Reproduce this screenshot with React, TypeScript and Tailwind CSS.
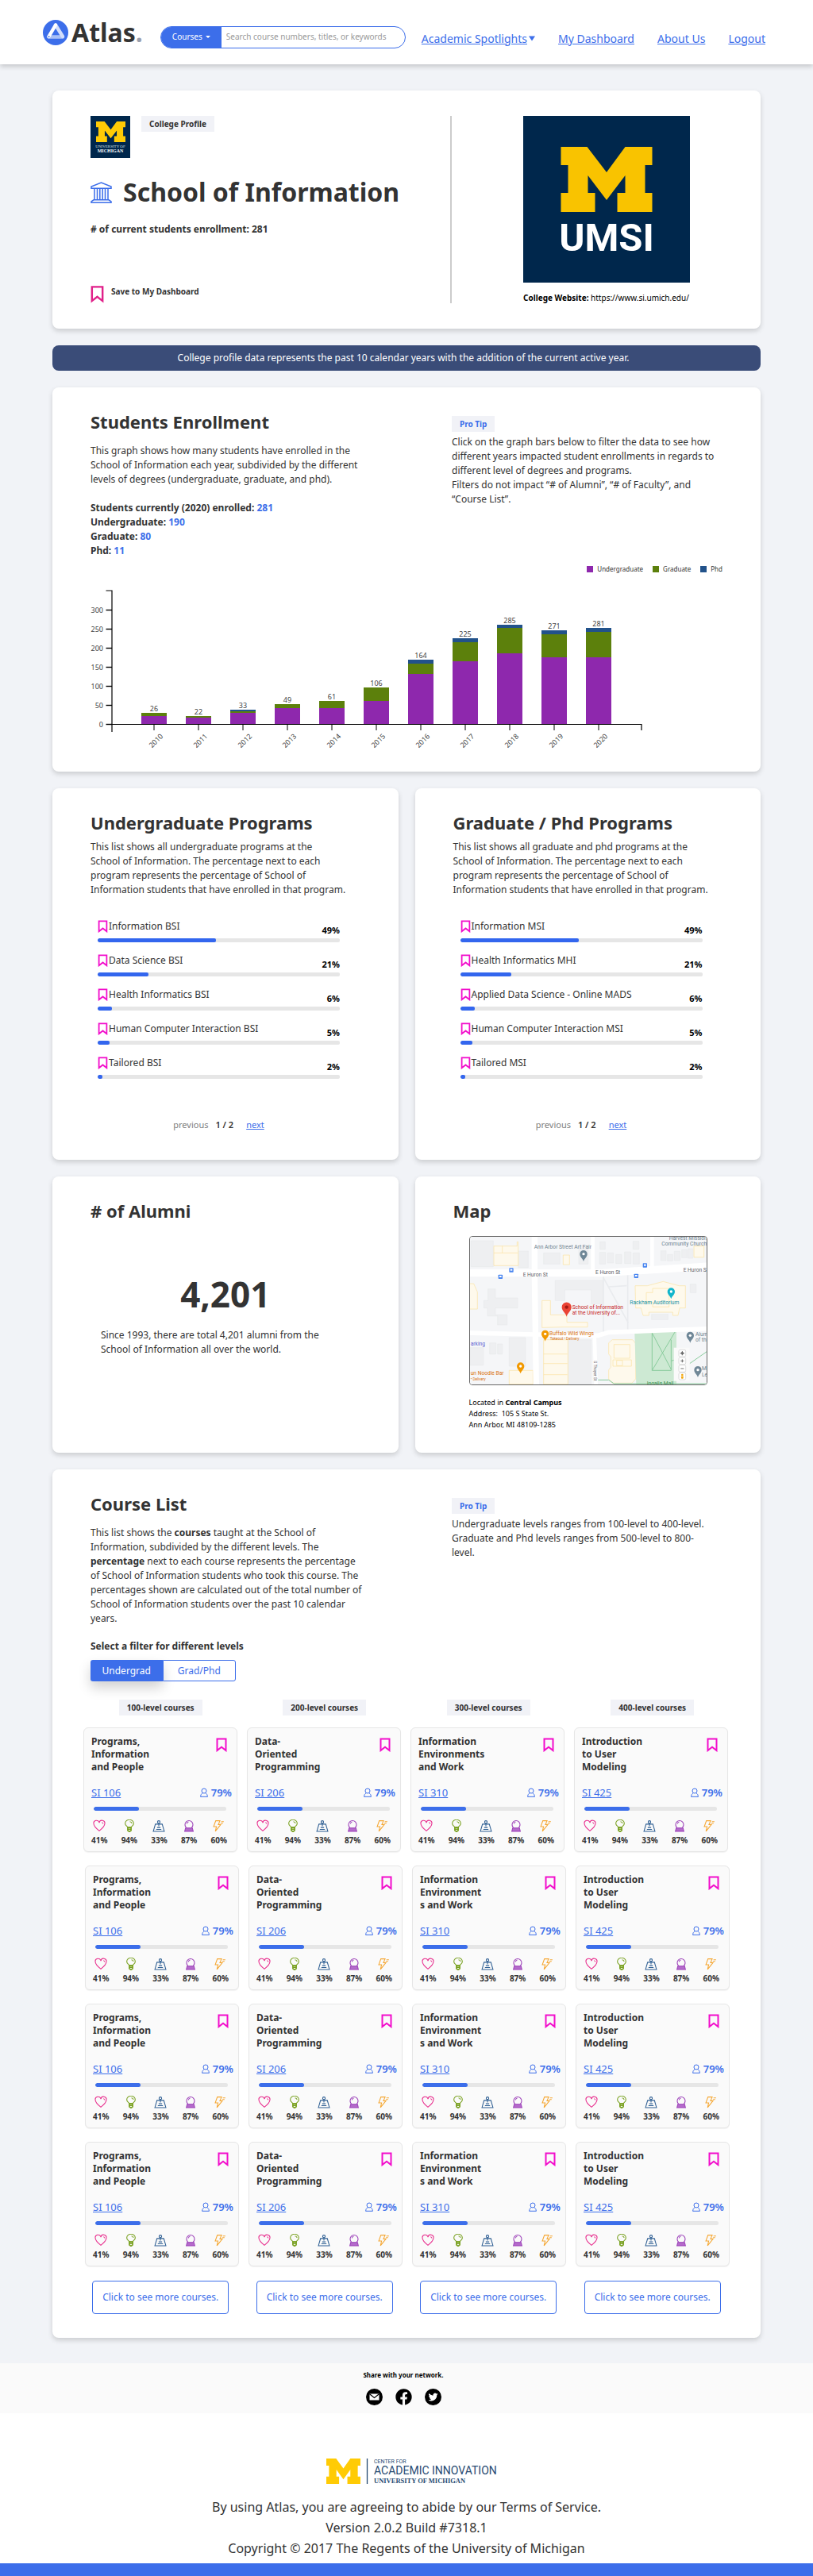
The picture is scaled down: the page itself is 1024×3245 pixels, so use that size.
import React from "react";
import { FaFacebook } from "react-icons/fa";

const M_PATH =
  "M0 0H33L57.5 32 81 0H115V23H106V58H115V82H71V58H81V36L57.5 67 34 36V58H43V82H0V58H9V23H0Z";

function Bookmark({ className }: { className: string }) {
  return (
    <svg viewBox="0 0 14 18" className={className} fill="none" stroke="currentColor" strokeWidth="2" aria-hidden="true">
      <path d="M1.5 1.5h11v14.6L7 11.8l-5.5 4.3z" />
    </svg>
  );
}

function Badge({ children, blue = false }: { children: React.ReactNode; blue?: boolean }) {
  return (
    <span
      className={
        "inline-block bg-[#f1f2f7] px-[10px] text-[10px] leading-5 font-bold whitespace-nowrap " +
        (blue ? "text-[#3c6eea]" : "")
      }
    >
      {children}
    </span>
  );
}

function Card({ className = "", children }: { className?: string; children: React.ReactNode }) {
  return (
    <section className={"rounded-lg bg-white shadow-[0_3px_6px_rgba(0,0,0,0.16)] " + className}>{children}</section>
  );
}

function Header() {
  return (
    <header className="relative flex h-[81px] items-center bg-white pt-3 pr-[60px] pl-[54px] shadow-[0_3px_6px_rgba(0,0,0,0.18)]">
      <a href="#" aria-label="Atlas" className="flex items-center pb-3">
        <svg viewBox="0 0 32 32" className="h-8 w-8" aria-hidden="true">
          <circle cx="16" cy="16" r="16" fill="#3c6eea" />
          <path d="M7.500 21.500h17.500" stroke="#a9c0f6" strokeWidth="4.4" strokeLinecap="round" />
          <path d="M16 6.500 25 21" stroke="#d3defb" strokeWidth="4.4" strokeLinecap="round" />
          <path d="M16 6.500 7.500 21" stroke="#fff" strokeWidth="4.4" strokeLinecap="round" />
          <circle cx="7.600" cy="21.200" r="1" fill="#3c6eea" />
        </svg>
        <span className="ml-1 text-[32px] leading-8 font-bold">
          Atlas<span className="text-[#9aa0ae]">.</span>
        </span>
      </a>
      <form className="ml-[22px] flex h-7 w-[309px] shrink-0 overflow-hidden rounded-full border border-[#3c6eea]">
        <button type="button" className="flex w-[76px] items-center justify-center gap-1 bg-[#3c6eea] text-[10px] text-white">
          Courses
          <svg viewBox="0 0 6 3" className="h-[3px] w-[6px]" fill="currentColor" aria-hidden="true">
            <path d="M0 0h6L3 3z" />
          </svg>
        </button>
        <input
          aria-label="Search courses"
          placeholder="Search course numbers, titles, or keywords"
          className="min-w-0 flex-1 px-[6px] text-[10px] outline-none placeholder:text-[#999]"
        />
      </form>
      <nav className="flex flex-1 justify-between pt-1 pl-5 text-[14px] leading-5 whitespace-nowrap text-[#3c6eea]">
        <span className="flex items-center">
          <a href="#" className="underline">Academic Spotlights</a>
          <svg viewBox="0 0 9 7" className="ml-0.5 h-[7px] w-2" fill="currentColor" aria-hidden="true">
            <path d="M0 0h9L4.5 7z" />
          </svg>
        </span>
        <a href="#" className="underline">My Dashboard</a>
        <a href="#" className="underline">About Us</a>
        <a href="#" className="underline">Logout</a>
      </nav>
    </header>
  );
}

function Profile() {
  return (
    <Card className="flex py-8 pl-12">
      <div className="flex h-[236px] w-[453px] flex-col">
        <div className="flex items-start gap-[14px]">
          <svg viewBox="0 0 50 53" className="h-[53px] w-[50px]" role="img" aria-label="University of Michigan">
            <rect width="50" height="53" fill="#00274c" />
            <svg x="7" y="7" width="37" height="26" viewBox="0 0 115 82" preserveAspectRatio="none">
              <path d={M_PATH} fill="#ffcb05" />
            </svg>
            <text x="25" y="39.5" textAnchor="middle" fontFamily="Liberation Serif" fontSize="5" fill="#dfe4ea">UNIVERSITY OF</text>
            <text x="25" y="46" textAnchor="middle" fontFamily="Liberation Serif" fontWeight="700" fontSize="6" fill="#fff">MICHIGAN</text>
          </svg>
          <Badge>College Profile</Badge>
        </div>
        <div className="mt-[23px] flex items-center gap-[14px]">
          <svg viewBox="0 0 27 27" className="h-[27px] w-[27px]" fill="none" stroke="#3c6eea" strokeWidth="1.5" aria-hidden="true">
            <path d="M1 8.200V6L13.500 1 26 6v2.200zM5 8.200v14M8.500 8.200v14M11.800 8.200v14M15.200 8.200v14M18.500 8.200v14M22 8.200v14M4 22.800h19L26 25v1.200H1V25z" />
          </svg>
          <h1 className="text-[32px] leading-10 font-bold">School of Information</h1>
        </div>
        <p className="mt-[18px] leading-[18px] font-bold"># of current students enrollment: 281</p>
        <button type="button" className="mt-auto flex items-start gap-[9px] text-left">
          <Bookmark className="h-[23px] w-[17px] text-[#e0218a]" />
          <span className="text-[10px] leading-4 font-bold">Save to My Dashboard</span>
        </button>
      </div>
      <div className="w-0.5 bg-[#ccc]" />
      <div className="flex flex-1 flex-col items-center">
        <svg viewBox="0 0 210 210" className="h-[210px] w-[210px]" role="img" aria-label="UMSI">
          <rect width="210" height="210" fill="#00274c" />
          <g transform="translate(47.500 39)">
            <path d={M_PATH} fill="#f9c300" />
          </g>
          <text x="105" y="170" textAnchor="middle" fontFamily="Roboto" fontWeight="700" fontSize="49" fill="#fff">UMSI</text>
        </svg>
        <p className="mt-3 text-[10px] leading-[14px] text-black">
          <b>College Website:</b> <a href="#">https://www.si.umich.edu/</a>
        </p>
      </div>
    </Card>
  );
}

const BARS: [string, number, number, number, number][] = [
  ["2010", 26, 10, 4, 0],
  ["2011", 22, 8, 2, 0],
  ["2012", 33, 14, 2, 2],
  ["2013", 49, 20, 5, 0],
  ["2014", 61, 20, 9, 0],
  ["2015", 106, 29, 17, 0],
  ["2016", 164, 63, 13, 5],
  ["2017", 225, 79, 24, 5],
  ["2018", 285, 89, 32, 4],
  ["2019", 271, 84, 29, 5],
  ["2020", 281, 84, 32, 5],
];

function Chart() {
  const base = 182;
  return (
    <svg viewBox="0 0 720 219" className="h-[219px] w-[720px]" fontSize="9" fill="#444" role="img" aria-label="Students enrolled each year">
      {BARS.map(([year, total, u, g, p], i) => {
        const x = 80 + i * 56;
        return (
          <g key={year}>
            <rect x={x - 16} y={base - u} width="32" height={u} fill="#8e28ad" />
            <rect x={x - 16} y={base - u - g} width="32" height={g} fill="#5c800c" />
            <rect x={x - 16} y={base - u - g - p} width="32" height={p} fill="#22528a" />
            <text x={x} y={base - u - g - p - 2} textAnchor="middle">{total}</text>
            <path d={`M${x} ${base}v8`} stroke="#000" />
            <text transform={`translate(${x + 12} 198) rotate(-45)`} textAnchor="end">{year}</text>
          </g>
        );
      })}
      <path d="M19.500 14H27V192M27 182.500H694V190" fill="none" stroke="#000" strokeWidth="1.200" />
      {[0, 50, 100, 150, 200, 250, 300].map((v) => (
        <g key={v}>
          <path d={`M19.500 ${182.5 - v * 0.48}H27`} stroke="#000" strokeWidth="1.400" />
          <text x="16" y={185.5 - v * 0.48} textAnchor="end">{v}</text>
        </g>
      ))}
    </svg>
  );
}

function LegendItem({ color, label }: { color: string; label: string }) {
  return (
    <span className="flex items-center gap-[5px]">
      <span className={"h-2 w-2 " + color} />
      {label}
    </span>
  );
}

function Enrollment() {
  return (
    <Card className="px-12 pt-7 pb-[23px]">
      <div className="flex">
        <div className="w-[455px]">
          <h2 className="text-[22px] leading-[30px] font-bold">Students Enrollment</h2>
          <p className="mt-[13px] max-w-[350px] leading-[18px]">
            This graph shows how many students have enrolled in the School of Information each year, subdivided by the
            different levels of degrees (undergraduate, graduate, and phd).
          </p>
          <p className="mt-[18px] leading-[18px] font-bold">
            Students currently (2020) enrolled: <span className="text-[#3c6eea]">281</span>
            <br />
            Undergraduate: <span className="text-[#3c6eea]">190</span>
            <br />
            Graduate: <span className="text-[#3c6eea]">80</span>
            <br />
            Phd: <span className="text-[#3c6eea]">11</span>
          </p>
        </div>
        <div className="w-[338px] pt-2">
          <Badge blue>Pro Tip</Badge>
          <p className="mt-1 leading-[18px]">
            Click on the graph bars below to filter the data to see how
            <br />
            different years impacted student enrollments in regards to different level of degrees and programs.
            <br />
            Filters do not impact “# of Alumni”, “# of Faculty”, and “Course List”.
          </p>
        </div>
      </div>
      <div className="mt-2 flex justify-end gap-3 text-[8px] leading-3">
        <LegendItem color="bg-[#8e28ad]" label="Undergraduate" />
        <LegendItem color="bg-[#5c800c]" label="Graduate" />
        <LegendItem color="bg-[#22528a]" label="Phd" />
      </div>
      <div className="mt-[7px]">
        <Chart />
      </div>
    </Card>
  );
}

function Programs({ title, kind, items }: { title: string; kind: string; items: [string, number][] }) {
  return (
    <Card className="px-12 pt-[27px] pb-9">
      <h2 className="text-[22px] leading-8 font-bold">{title}</h2>
      <p className="mt-[6px] max-w-[330px] leading-[18px]">
        This list shows all {kind} programs at the
        <br />
        School of Information. The percentage next to each
        <br />
        program represents the percentage of School of Information students that have enrolled in that program.
      </p>
      <div className="mt-7 ml-[9px] w-[305px]">
        <ul className="flex flex-col gap-[14px]">
          {items.map(([name, pct]) => (
            <li key={name}>
              <div className="flex h-[23px] justify-between">
                <span className="flex h-[18px] items-center gap-[1px] leading-[18px]">
                  <button type="button" aria-label={"Save " + name}>
                    <Bookmark className="h-4 w-[13px] text-[#f20dcb]" />
                  </button>
                  {name}
                </span>
                <b className="self-end text-[11px] leading-[18px] text-black">{pct}%</b>
              </div>
              <div className="mt-[1px] h-[5px] overflow-hidden rounded-xs bg-[#e6e6e6]">
                <div className="h-full rounded-xs bg-[#3366ee]" style={{ width: pct + "%" }} />
              </div>
            </li>
          ))}
        </ul>
        <div className="mt-[50px] flex justify-center text-[11px] leading-4">
          <button type="button" disabled className="text-[#808080]">previous</button>
          <span className="ml-[9px] font-semibold">1 / 2</span>
          <a href="#" className="ml-4 text-[#3c6eea] underline">next</a>
        </div>
      </div>
    </Card>
  );
}

function MapPin({ x, y, color, s = 1 }: { x: number; y: number; color: string; s?: number }) {
  return (
    <g transform={`translate(${x} ${y}) scale(${s})`}>
      <path d="M0 24C-3 12-14 8-14-4A14 14 0 0 1 14-4C14 8 3 12 0 24z" fill={color} />
      <circle cy="-4" r="5" fill={color === "#ea4335" ? "#a01812" : "#fff"} />
    </g>
  );
}

function CampusMap() {
  return (
    <svg viewBox="36 51 894 558" preserveAspectRatio="none" className="block h-full w-full" fontFamily="Roboto" fontSize="20" role="img" aria-label="Map of Central Campus">
      <rect x="30" y="45" width="910" height="570" fill="#f5f6f8" />
      <g fill="#eeeff1" stroke="#e4e6e9" strokeWidth="1.5">
        <path d="M40 66h84v98H40zM218 105h38v62h-38zM314 112h62v42h-62zM447 84h35v70h-35zM527 70h20v28h-20zM526 110h22v44h-22zM556 112h22v38h-22zM587 118h22v34h-22zM620 108h24v44h-24zM652 68h22v30h-22zM652 112h24v42h-24zM757 104h20v36h-20zM782 118h20v24h-20zM808 106h22v34h-22zM836 100h20v30h-20zM860 96h18v36h-18z" />
        <path d="M104 248h28v34h84v38h-84v26h44v38h-36v-34h-38v-30H88v-28h16zM358 216h180v88h-44v-52H394v40h-36zM722 344h62v20h-62zM868 230h22v32h-22zM36 470h50v66h-50zM110 452h24v42h-24zM140 456h18v38h-18zM184 432h62v108h-62zM406 440h88v168h-88z" />
      </g>
      <g fill="#fef9ec" stroke="#fbe2a0" strokeWidth="2">
        <path d="M126 86h88V70h4v90h-92zM158 86v26M126 112h90M388 120h24v36h-24zM882 86h38v42h-38zM30 228h20l14 32v64H30z" />
        <path d="M308 292h32v54h62v28h78v18h-88l-84 2zM660 236h46l60-16 60 16h24v84h-22l-6 28h-20v-12H712v12h-22l-8-28h-20zM726 246h62v70h-62v-18h-24v-36h24z" />
        <path d="M314 440h92v168h-92zM314 494h90M314 530h90M314 572h90M560 452l14-12h76l12 14v134l-14 16h-74l-14-16v-34l8-10v-40l-8-10zM580 458h60v52h-60zM576 516h70v24h-70zM590 518h22v20h-22zM184 556h90v52h-90z" />
      </g>
      <path d="M658 416 816 404V610H664z" fill="#cde9d3" />
      <path d="M724 408V556M724 414 796 552M812 408 724 556M724 556H796V440M796 520 830 510M866 530 932 484M520 592H560L580 606H940" fill="none" stroke="#89cb9c" strokeWidth="3" />
      <g fill="none" stroke="#fff">
        <path d="M540 200V414M540 206 634 376M632 196V404M560 240 628 236" stroke="#e9ebee" strokeWidth="5" />
        <path d="M30 188H250L530 188 940 162" strokeWidth="28" />
        <path d="M30 414 280 420 520 424 560 412 940 398" strokeWidth="17" />
        <path d="M280 50V190L286 610" strokeWidth="22" />
        <path d="M500 45V184M724 45V180M506 420 512 610" strokeWidth="14" />
      </g>
      <g fill="#5f6368">
        <text x="236" y="202">E Huron St</text>
        <text x="510" y="193">E Huron St</text>
        <text x="842" y="183">E Huron S</text>
        <text transform="translate(504 520) rotate(90)" fontSize="15">S Thayer St</text>
      </g>
      <g fill="#6f8390">
        <text x="278" y="95">Ann Arbor Street Art Fair</text>
        <text x="788" y="64">Harvest Mission</text>
        <text x="760" y="84">Community Church</text>
        <text x="888" y="427">Alum</text>
        <text x="888" y="448">of th</text>
        <text x="912" y="556">M</text>
        <text x="912" y="578">Le</text>
      </g>
      <g fill="#d9730f">
        <text x="336" y="422">Buffalo Wild Wings</text>
        <text x="338" y="441" fontSize="14">Takeout • Delivery</text>
        <text x="38" y="574">un Noodle Bar</text>
        <text x="38" y="593" fontSize="14">• Delivery</text>
      </g>
      <g fill="#c5221f">
        <text x="422" y="323">School of Information</text>
        <text x="422" y="345">at the University of...</text>
      </g>
      <text x="640" y="305" fill="#1a93a5">Rackham Auditorium</text>
      <text x="38" y="461" fill="#5a5fd0">arking</text>
      <text x="704" y="612" fill="#3f9155">Ingalls Mall</text>
      <MapPin x={465} y={120} color="#6f8797" />
      <MapPin x={868} y={428} color="#6f8797" />
      <MapPin x={897} y={558} color="#6f8797" />
      <MapPin x={796} y={262} color="#12b5cb" />
      <MapPin x={320} y={422} color="#f29900" />
      <MapPin x={227} y={544} color="#f29900" />
      <MapPin x={401} y={322} color="#ea4335" s={1.3} />
      {[[192, 177], [151, 202], [697, 159], [664, 199]].map(([x, y]) => (
        <g key={x}>
          <rect x={x - 8} y={y - 8} width="16" height="16" rx="2" fill="#4a86f0" />
          <rect x={x - 4} y={y - 4} width="8" height="6" fill="#fff" />
        </g>
      ))}
      <rect x="806" y="470" width="60" height="126" fill="#fafafa" />
      {[0, 1, 2, 3].map((i) => (
        <rect key={i} x="825" y={478 + i * 29} width="26" height="26" rx="5" fill="#fff" stroke="#ccc" strokeWidth="2" />
      ))}
      <g fill="none" stroke="#555" strokeWidth="2.500">
        <circle cx="838" cy="491" r="4" />
        <path d="M838 483v16M830 491h16M832 520h12M838 514v12M832 549h12" />
      </g>
      <path d="M838 569a4 4 0 1 1 0 8 4 4 0 1 1 0-8zM833 578h10l-2 9h-6z" fill="#f2a60c" />
    </svg>
  );
}

type Course = { lines: string[]; code: string };

const COURSES: Course[] = [
  { lines: ["Programs,", "Information", "and People"], code: "SI 106" },
  { lines: ["Data-", "Oriented", "Programming"], code: "SI 206" },
  { lines: ["Information", "Environments", "and Work"], code: "SI 310" },
  { lines: ["Introduction", "to User", "Modeling"], code: "SI 425" },
];

const STATS: [string, React.ReactNode][] = [
  [
    "41%",
    <g key="h" stroke="#e8308f">
      <path d="M7.5 13.5C3 10 1 7.5 1 5a3.3 3.3 0 0 1 6.5-1.2A3.3 3.3 0 0 1 14 5c0 2.500-2 5-6.500 8.500z" />
      <path d="M10.500 3.600c.9.100 1.500.7 1.600 1.600" />
    </g>,
  ],
  [
    "94%",
    <g key="b" stroke="#78a01e">
      <path d="M5.500 9.500C5.300 8 2.500 7.500 2.500 4.800a5 4.500 0 0 1 10 0C12.500 7.500 9.700 8 9.500 9.500zM8 2.500c1.500.2 2.300 1 2.400 2.200" />
      <path d="M5.500 9.500h4v3.500l-2 1.500-2-1.500zM5.500 11.500h4" strokeWidth="1.500" />
    </g>,
  ],
  [
    "33%",
    <g key="w" stroke="#2f5f93">
      <path d="M3.500 5.500h8l2.500 8.500H1zM7.500 4.500V8" />
      <circle cx="7.500" cy="3" r="1.500" />
      <path d="M5.500 9.500h4M4.500 11.700h6" />
    </g>,
  ],
  [
    "87%",
    <g key="c" stroke="#9b3fb8">
      <path d="M4.500 9.800A4.700 4.700 0 1 1 10.500 9.800M5 5c.2-1.200 1-2 2-2.200" />
      <path d="M3.500 10h8l1 4h-10z" fill="#b46bcb" />
    </g>,
  ],
  [
    "60%",
    <g key="z" stroke="#f5a733">
      <path d="M3.500 1.500h5L6.500 6h3L3 14l1.300-5.500H1z" />
      <path d="M10 2.500h3M9.500 4.500h2.500" />
    </g>,
  ],
];

function CourseCard({ course, split }: { course: Course; split: boolean }) {
  const lines = split && course.code === "SI 310" ? ["Information", "Environment", "s and Work"] : course.lines;
  return (
    <article className="rounded-md border border-[#e6e6e6] bg-[#fafafa] pt-[9px] pb-2 pl-[9px] shadow-[0_1px_1px_rgba(0,0,0,0.05)]">
      <div className="flex items-start justify-between pr-3">
        <h3 className="leading-4 font-bold">
          {lines[0]}
          <br />
          {lines[1]}
          <br />
          {lines[2]}
        </h3>
        <button type="button" aria-label={"Save " + course.code} className="pt-[3px]">
          <Bookmark className="h-[18px] w-[14px] text-[#f20dcb]" />
        </button>
      </div>
      <div className="mt-[15px] flex items-center justify-between pr-[6px] text-[13px] leading-[18px] text-[#3c6eea]">
        <a href="#" className="underline">{course.code}</a>
        <span className="flex items-center gap-1 font-semibold">
          <svg viewBox="0 0 10 12" className="h-3 w-[10px]" fill="none" stroke="currentColor" aria-hidden="true">
            <circle cx="5" cy="4" r="3" />
            <path d="M.7 11.3c0-2.600 1-3.700 2.500-4.300M9.300 11.300c0-2.600-1-3.700-2.500-4.300M.5 11.300h9" />
          </svg>
          79%
        </span>
      </div>
      <div className="mt-[9px] mr-[13px] ml-[3px] h-[5px] overflow-hidden rounded-full bg-[#e6e6e6]">
        <div className="h-full w-[34%] rounded-full bg-[#3c6eea]" />
      </div>
      <ul className="mt-[11px] flex justify-between pr-3 text-[10px] leading-3 font-bold">
        {STATS.map(([label, icon]) => (
          <li key={label} className="flex flex-col items-center gap-1">
            <svg viewBox="0 0 15 15" className="h-4 w-4" fill="none" aria-hidden="true">
              {icon}
            </svg>
            {label}
          </li>
        ))}
      </ul>
    </article>
  );
}

function CourseList() {
  return (
    <Card className="pt-[27px] pb-[30px]">
      <div className="flex pl-12">
        <div className="w-[455px]">
          <h2 className="text-[22px] leading-8 font-bold">Course List</h2>
          <p className="mt-3 max-w-[345px] leading-[18px]">
            This list shows the <b>courses</b> taught at the School of Information, subdivided by the different levels. The{" "}
            <b>percentage</b> next to each course represents the percentage of School of Information students who took
            this course. The percentages shown are calculated out of the total number of School of Information students
            over the past 10 calendar years.
          </p>
          <p className="mt-[17px] leading-[18px] font-bold">Select a filter for different levels</p>
          <div className="mt-2 flex h-[27px] w-[183px]">
            <button type="button" className="flex-1 rounded-l-[3px] bg-[#3c6eea] text-white shadow-[0_8px_16px_rgba(0,0,0,0.18)]">
              Undergrad
            </button>
            <button type="button" className="flex-1 rounded-r-[3px] border border-[#3c6eea] text-[#3c6eea]">
              Grad/Phd
            </button>
          </div>
        </div>
        <div className="w-[328px] pt-[9px]">
          <Badge blue>Pro Tip</Badge>
          <p className="mt-1 leading-[18px]">
            Undergraduate levels ranges from 100-level to 400-level. Graduate and Phd levels ranges from 500-level to
            800-level.
          </p>
        </div>
      </div>
      <div className="mx-[39px] mt-[23px]">
        <div className="grid grid-cols-4 justify-items-center gap-3 leading-5">
          {[100, 200, 300, 400].map((n) => (
            <Badge key={n}>{n}-level courses</Badge>
          ))}
        </div>
        <div className="mt-[15px] flex flex-col gap-[17px]">
          {[0, 1, 2, 3].map((row) => (
            <div key={row} className={"grid grid-cols-4 gap-3 " + (row === 0 ? "pr-0.5" : "pl-0.5")}>
              {COURSES.map((c) => (
                <CourseCard key={c.code} course={c} split={row > 0} />
              ))}
            </div>
          ))}
        </div>
        <div className="mt-[18px] grid grid-cols-4 justify-items-center gap-3">
          {COURSES.map((c) => (
            <button key={c.code} type="button" className="h-[42px] w-[172px] rounded-[4px] border border-[#3c6eea] whitespace-nowrap text-[#3c6eea]">
              Click to see more courses.
            </button>
          ))}
        </div>
      </div>
    </Card>
  );
}

function Footer() {
  return (
    <footer>
      <div className="flex flex-col items-center bg-[#fafafa] pt-[9px] pr-2 pb-[10px]">
        <p className="text-[8px] leading-3 font-bold text-black">Share with your network.</p>
        <div className="mt-[11px] flex gap-4 text-black">
          <a href="#" aria-label="Email">
            <svg viewBox="0 0 21 21" className="h-[21px] w-[21px]" aria-hidden="true">
              <circle cx="10.5" cy="10.5" r="10.5" />
              <path d="M4.500 6.500h12v8h-12z" fill="#fff" />
              <path d="m4.500 6.800 6 4.700 6-4.700" fill="none" stroke="#000" strokeWidth="1.200" />
            </svg>
          </a>
          <a href="#" aria-label="Facebook">
            <FaFacebook className="h-[21px] w-[21px]" />
          </a>
          <a href="#" aria-label="Twitter">
            <svg viewBox="0 0 21 21" className="h-[21px] w-[21px]" aria-hidden="true">
              <circle cx="10.5" cy="10.5" r="10.5" />
              <path
                transform="translate(4.500 4.500) scale(.5)"
                fill="#fff"
                d="M24 4.600a10 10 0 0 1-2.800.8 5 5 0 0 0 2.200-2.700c-1 .5-2 1-3.100 1.200a4.900 4.900 0 0 0-8.400 4.500A14 14 0 0 1 1.700 3.200a4.900 4.900 0 0 0 1.500 6.500 5 5 0 0 1-2.200-.6v.1a4.900 4.900 0 0 0 3.900 4.800 5 5 0 0 1-2.200.1 4.900 4.900 0 0 0 4.600 3.400A9.900 9.900 0 0 1 0 19.500a14 14 0 0 0 21.500-12.400A10 10 0 0 0 24 4.600z"
              />
            </svg>
          </a>
        </div>
      </div>
      <div className="flex flex-col items-center bg-white pt-[57px] pb-[6px]">
        <svg viewBox="0 0 222 32" className="ml-5 h-8 w-[222px]" fill="#274b73" role="img" aria-label="Center for Academic Innovation">
          <svg x="0" y="0" width="43" height="32" viewBox="0 0 115 82" preserveAspectRatio="none">
            <path d={M_PATH} fill="#ffcb05" />
          </svg>
          <path d="M51.500 0V32" stroke="#274b73" strokeWidth="1.300" />
          <text x="60" y="6" fontFamily="Roboto" fontSize="7">CENTER FOR</text>
          <text x="60" y="20" fontFamily="Roboto" fontSize="14">ACADEMIC INNOVATION</text>
          <text x="60" y="31" fontFamily="Liberation Serif" fontWeight="700" fontSize="8.500">UNIVERSITY OF MICHIGAN</text>
        </svg>
        <div className="mt-4 text-center text-[16px] leading-[26px]">
          <p>By using Atlas, you are agreeing to abide by our Terms of Service.</p>
          <p>Version 2.0.2 Build #7318.1</p>
          <p>Copyright © 2017 The Regents of the University of Michigan</p>
        </div>
      </div>
      <div className="h-4 bg-[#3c6eea]" />
    </footer>
  );
}

export default function App() {
  return (
    <div className="bg-[#f1f3f7] font-['Noto_Sans',sans-serif] text-[12px] text-[#333]">
      <Header />
      <main className="flex flex-col gap-[21px] px-[66px] pt-[33px] pb-8">
        <Profile />
        <p className="rounded-lg bg-[#3a4c78] pr-2 text-center leading-8 text-white">
          College profile data represents the past 10 calendar years with the addition of the current active year.
        </p>
        <Enrollment />
        <div className="grid grid-cols-2 gap-[21px]">
          <Programs
            title="Undergraduate Programs"
            kind="undergraduate"
            items={[
              ["Information BSI", 49],
              ["Data Science BSI", 21],
              ["Health Informatics BSI", 6],
              ["Human Computer Interaction BSI", 5],
              ["Tailored BSI", 2],
            ]}
          />
          <Programs
            title="Graduate / Phd Programs"
            kind="graduate and phd"
            items={[
              ["Information MSI", 49],
              ["Health Informatics MHI", 21],
              ["Applied Data Science - Online MADS", 6],
              ["Human Computer Interaction MSI", 5],
              ["Tailored MSI", 2],
            ]}
          />
          <Card className="px-12 pt-[27px]">
            <h2 className="text-[22px] leading-8 font-bold"># of Alumni</h2>
            <p className="mt-[65px] text-center text-[44px] leading-[48px] font-bold">4,201</p>
            <p className="mt-[19px] ml-[13px] max-w-[300px] leading-[18px]">
              Since 1993, there are total 4,201 alumni from the School of Information all over the world.
            </p>
          </Card>
          <Card className="px-12 pt-[27px] pb-7">
            <h2 className="text-[22px] leading-8 font-bold">Map</h2>
            <div className="mt-4 ml-5 h-[188px] w-[300px] overflow-hidden rounded-[4px] border border-[#666]">
              <CampusMap />
            </div>
            <address className="mt-[15px] ml-5 text-[9px] leading-[14px] text-black not-italic">
              Located in <b>Central Campus</b>
              <br />
              Address:&nbsp; 105 S State St.
              <br />
              Ann Arbor, MI 48109-1285
            </address>
          </Card>
        </div>
        <CourseList />
      </main>
      <Footer />
    </div>
  );
}
